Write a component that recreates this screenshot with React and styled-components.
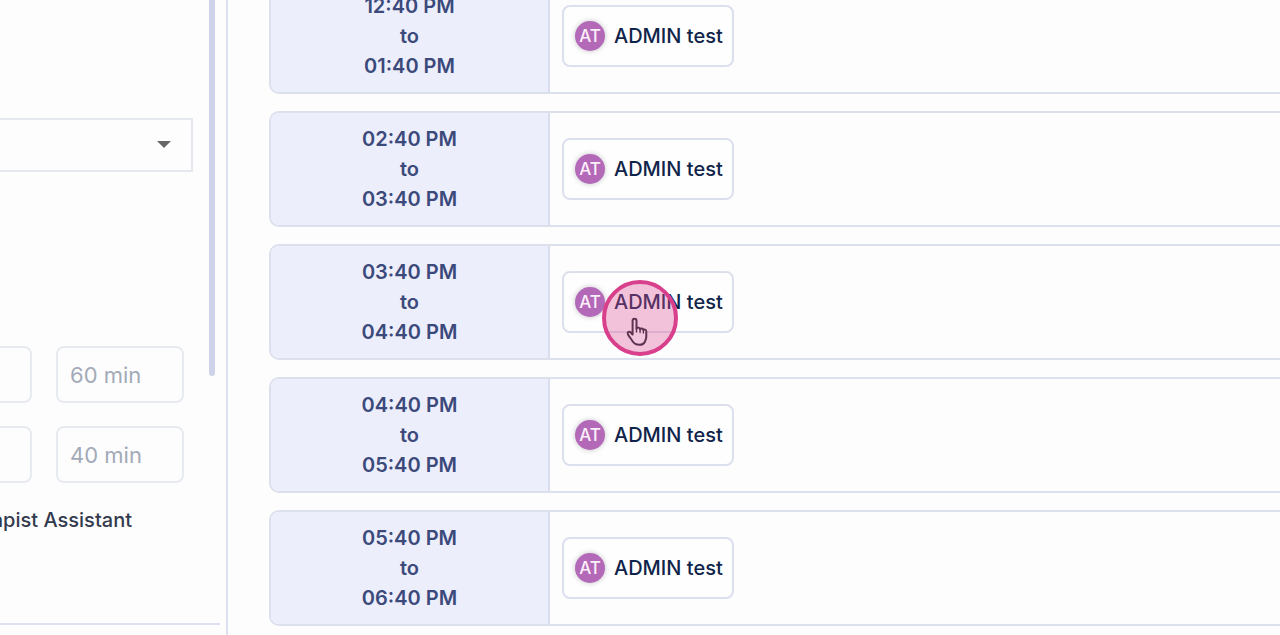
import React from "react";
import styled, { createGlobalStyle } from "styled-components";

const slots = [
  { from: "12:40 PM", to: "01:40 PM", name: "ADMIN test" },
  { from: "02:40 PM", to: "03:40 PM", name: "ADMIN test" },
  { from: "03:40 PM", to: "04:40 PM", name: "ADMIN test", active: true },
  { from: "04:40 PM", to: "05:40 PM", name: "ADMIN test" },
  { from: "05:40 PM", to: "06:40 PM", name: "ADMIN test" },
];

function Sidebar() {
  return (
    <Aside>
      <ScrollArea>
        <Form>
          <SelectWrap>
            <Select aria-label="Service" defaultValue="">
              <option value=""></option>
            </Select>
            <Caret viewBox="0 0 14 7" aria-hidden="true">
              <path d="M0 0h14L7 7z" fill="#666" />
            </Caret>
          </SelectWrap>
          <Durations>
            <Input type="text" aria-label="Session" />
            <Input
              type="text"
              aria-label="Session length"
              placeholder="60 min"
            />
            <Input type="text" aria-label="Break" />
            <Input type="text" aria-label="Break length" placeholder="40 min" />
          </Durations>
          <Role>Therapist Assistant</Role>
        </Form>
        <Thumb />
      </ScrollArea>
      <SideFooter />
    </Aside>
  );
}

function Pointer() {
  return (
    <Ring>
      <Hand viewBox="0 0 24 30" aria-hidden="true">
        <path
          d="M7.600 17.500V4c0-2.900 3.900-2.900 3.900 0v7.800c.4-1.700 3.400-1.600 3.600.5.6-1.400 3.100-1.100 3.300.8.7-1 2.900-.6 2.900 1.300v5.200c0 2-.6 3.300-1.300 4.900-.9 2-2.600 3.300-5.600 3.300-3.500 0-5.400-1.200-7-3.800-1.300-2.100-3.200-4.400-4.400-6.600-1.100-2.100.9-3.400 2.500-2.100z"
          fill="#f2c6dc"
          stroke="#5e3350"
          strokeWidth="2"
          strokeLinejoin="round"
        />
        <path
          d="M11.500 11.500v3.500M15.100 12.500v3M18.400 13.500v2.500"
          fill="none"
          stroke="#5e3350"
          strokeWidth="1.4"
          strokeLinecap="round"
        />
      </Hand>
    </Ring>
  );
}

function App() {
  return (
    <>
      <GlobalStyle />
      <Page>
        <Sidebar />
        <Schedule>
          {slots.map((slot) => (
            <Slot key={slot.from}>
              <Time>
                <span>{slot.from}</span>
                <span>to</span>
                <span>{slot.to}</span>
              </Time>
              <People>
                <Person type="button">
                  <Avatar>AT</Avatar>
                  {slot.name}
                  {slot.active && <Pointer />}
                </Person>
              </People>
            </Slot>
          ))}
        </Schedule>
      </Page>
    </>
  );
}

const GlobalStyle = createGlobalStyle`
  *,
  *:before,
  *:after {
    box-sizing: border-box;
  }
  body {
    margin: 0;
    background: #fdfdfe;
    color: #10244a;
    font: 500 20px/30px Inter, "Open Sans", sans-serif;
  }
`;

const Page = styled.div`
  display: flex;
  height: 100vh;
  overflow: hidden;
`;

const Aside = styled.aside`
  display: flex;
  flex-direction: column;
  flex: none;
  width: 228px;
  border-right: 2px solid #dce0f0;
`;

const ScrollArea = styled.div`
  display: flex;
  justify-content: flex-end;
  flex: 1;
  min-height: 0;
  overflow: hidden;
  padding-right: 11px;
`;

const Form = styled.form`
  flex: none;
  width: 280px;
  padding: 118px 16px 0 0;
`;

const SelectWrap = styled.div`
  position: relative;
`;

const Select = styled.select`
  display: block;
  width: 100%;
  height: 54px;
  border: 2px solid #e5e8ee;
  background: transparent;
  appearance: none;
  font: inherit;
`;

const Caret = styled.svg`
  position: absolute;
  top: 23px;
  right: 22px;
  width: 14px;
  height: 7px;
  pointer-events: none;
`;

const Durations = styled.div`
  display: grid;
  justify-content: end;
  grid-template-columns: 104px 128px;
  gap: 23px 24px;
  margin: 174px 9px 22px 0;
`;

const Input = styled.input`
  min-width: 0;
  height: 57px;
  padding: 0 12px;
  border: 2px solid #e7eaef;
  border-radius: 8px;
  background: transparent;
  color: #2f3747;
  font: inherit;
  font-weight: 400;
  font-size: 22px;
  &::placeholder {
    color: #a3aab7;
    opacity: 1;
  }
`;

const Role = styled.div`
  padding-right: 61px;
  color: #343a4d;
  text-align: right;
  white-space: nowrap;
`;

const Thumb = styled.div`
  flex: none;
  width: 6px;
  height: 376px;
  border-radius: 0 0 3px 3px;
  background: #ced3e9;
`;

const SideFooter = styled.div`
  height: 12px;
  margin-right: 6px;
  border-top: 2px solid #dce0f0;
`;

const Schedule = styled.main`
  display: flex;
  flex-direction: column;
  gap: 17px;
  flex: 1;
  min-width: 0;
  margin-top: -22px;
  padding-left: 41px;
`;

const Slot = styled.section`
  display: flex;
  flex: none;
  height: 116px;
  border: 2px solid #dbe0ec;
  border-right: none;
  border-radius: 10px 0 0 10px;
`;

const Time = styled.div`
  display: flex;
  flex-direction: column;
  align-items: center;
  justify-content: center;
  width: 279px;
  border-right: 2px solid #d9dded;
  border-radius: 8px 0 0 8px;
  background: #edeefc;
  color: #3b4a7b;
  font-weight: 600;
`;

const People = styled.div`
  display: flex;
  align-items: center;
  flex: 1;
  padding: 0 12px;
`;

const Person = styled.button`
  position: relative;
  display: flex;
  align-items: center;
  gap: 9px;
  height: 62px;
  padding: 0 9px 0 11px;
  border: 2px solid #dce0ee;
  border-radius: 8px;
  background: #fefefe;
  color: inherit;
  font: inherit;
  white-space: nowrap;
  cursor: pointer;
`;

const Avatar = styled.span`
  display: flex;
  align-items: center;
  justify-content: center;
  width: 30px;
  height: 30px;
  border-radius: 50%;
  background: #b369b7;
  box-shadow: 0 0 4px 1px rgba(90, 90, 110, 0.25);
  color: #fbeffb;
  font-size: 17px;
`;

const Ring = styled.span`
  position: absolute;
  top: 7px;
  left: 38px;
  width: 76px;
  height: 76px;
  border: 4px solid #d8408c;
  border-radius: 50%;
  background: rgba(219, 80, 150, 0.34);
`;

const Hand = styled.svg`
  position: absolute;
  top: 33px;
  left: 19px;
  width: 24px;
  height: 30px;
`;

export default App;
